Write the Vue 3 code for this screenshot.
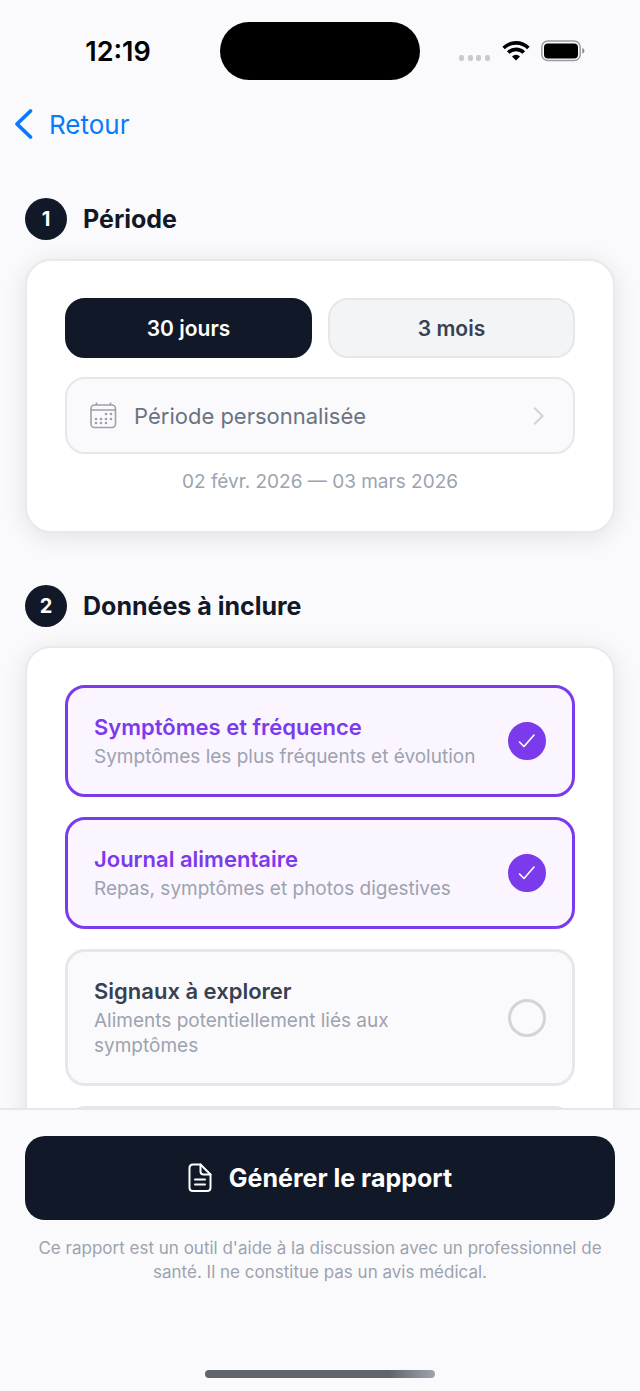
<script setup>
    import { ref } from 'vue';

    const period = ref('30');
    const periods = [
        { id: '30', label: '30 jours' },
        { id: '90', label: '3 mois' }
    ];

    const options = ref([
        {
            id: 'symptoms',
            title: 'Symptômes et fréquence',
            text: 'Symptômes les plus fréquents et évolution',
            checked: true
        },
        {
            id: 'journal',
            title: 'Journal alimentaire',
            text: 'Repas, symptômes et photos digestives',
            checked: true
        },
        {
            id: 'signals',
            title: 'Signaux à explorer',
            text: 'Aliments potentiellement liés aux symptômes',
            checked: false
        }
    ]);

    // small dots of the calendar icon
    const days = [
        [16, 12], [21, 12],
        [6, 17], [11, 17], [16, 17], [21, 17],
        [6, 21], [11, 21], [16, 21]
    ];
</script>


<template>
    <div class="screen">
        <header class="statusBar">
            <span class="time">12:19</span>
            <span class="island"></span>
            <div class="statusIcons">
                <svg width="32" height="22" viewBox="0 0 32 22" fill="#c9cad0">
                    <rect x="0" y="15" width="5" height="6" rx="2" />
                    <rect x="9" y="15" width="5" height="6" rx="2" />
                    <rect x="17" y="15" width="5" height="6" rx="2" />
                    <rect x="26" y="15" width="5" height="6" rx="2" />
                </svg>
                <svg width="28" height="22" viewBox="0 0 28 22" fill="none" stroke="#000" stroke-width="3.6">
                    <path d="M1.6 8 A17.5 17.5 0 0 1 26.4 8" />
                    <path d="M6.2 12.6 A11 11 0 0 1 21.8 12.6" />
                    <path d="M10 16.4 A5.8 5.8 0 0 1 18 16.4 L14 20.6 Z" fill="#000" stroke="none" />
                </svg>
                <svg width="44" height="22" viewBox="0 0 44 22">
                    <rect x="0.8" y="1" width="38.4" height="19.6" rx="6" fill="none" stroke="#9a9ba3" stroke-width="1.5" />
                    <rect x="3" y="3.4" width="34" height="15" rx="4" fill="#000" />
                    <path d="M41.4 8 C44 9 44 12.6 41.4 13.6 Z" fill="#85868e" />
                </svg>
            </div>
        </header>

        <nav class="navBar">
            <a href="#" class="back">
                <svg width="20" height="32" viewBox="0 0 20 32" fill="none" stroke="#087aff" stroke-width="3.8" stroke-linecap="round" stroke-linejoin="round">
                    <path d="M16.5 3 L3 16 L16.5 29" />
                </svg>
                Retour
            </a>
        </nav>

        <main class="content">
            <section>
                <h2><span class="step">1</span>Période</h2>
                <div class="card">
                    <div class="periods">
                        <button
                        v-for="item in periods"
                        :key="item.id"
                        class="periodButton"
                        :class="{ active: period === item.id }"
                        @click="period = item.id">
                            {{ item.label }}
                        </button>
                    </div>
                    <button class="customPeriod">
                        <svg width="27" height="27" viewBox="0 0 27 27" fill="none" stroke="#9ca0aa" stroke-width="1.6">
                            <rect x="1" y="3" width="24.5" height="22.5" rx="3.5" />
                            <path d="M1 8 H25.5 M6.5 0.5 V3 M20.5 0.5 V3" />
                            <circle v-for="[x, y] in days" :key="x + '-' + y" :cx="x" :cy="y" r="1.3" fill="#9ca0aa" stroke="none" />
                        </svg>
                        <span>Période personnalisée</span>
                        <svg width="12" height="18" viewBox="0 0 12 18" fill="none" stroke="#d1d5db" stroke-width="2.4" stroke-linecap="round" stroke-linejoin="round">
                            <path d="M2 1.5 L9.5 9 L2 16.5" />
                        </svg>
                    </button>
                    <p class="dates">02 févr. 2026 — 03 mars 2026</p>
                </div>
            </section>

            <section>
                <h2><span class="step">2</span>Données à inclure</h2>
                <div class="card options">
                    <label
                    v-for="option in options"
                    :key="option.id"
                    class="option"
                    :class="{ selected: option.checked }">
                        <span class="optionText">
                            <span class="optionTitle">{{ option.title }}</span>
                            <span class="optionInfo">{{ option.text }}</span>
                        </span>
                        <span class="check">
                            <input v-model="option.checked" type="checkbox">
                            <svg v-if="option.checked" width="18" height="16" viewBox="0 0 18 16" fill="none" stroke="#fff" stroke-width="1.6" stroke-linecap="round" stroke-linejoin="round">
                                <path d="M1.5 9 L6 13.5 L16 2" />
                            </svg>
                        </span>
                    </label>
                    <div class="option"></div>
                </div>
            </section>
        </main>

        <footer class="bottomBar">
            <button class="generate">
                <svg width="24" height="30" viewBox="0 0 24 30" fill="none" stroke="#fff" stroke-width="2" stroke-linecap="round" stroke-linejoin="round">
                    <path d="M5 1.5 H12.5 L22.5 11.5 V24.5 Q22.5 28 19 28 H5 Q1.5 28 1.5 24.5 V5 Q1.5 1.5 5 1.5 Z" />
                    <path d="M12.5 1.5 V8.5 Q12.5 11.5 15.5 11.5 H22.5 M7 16.5 H17 M7 21.5 H17" />
                </svg>
                Générer le rapport
            </button>
            <p class="notice">Ce rapport est un outil d'aide à la discussion avec un professionnel de santé. Il ne constitue pas un avis médical.</p>
            <div class="homeBar"></div>
        </footer>
    </div>
</template>

<style>
    body {
        background-color: #fafafc;
    }
</style>

<style scoped>
    .screen {
        height: 100vh;
        display: flex;
        flex-direction: column;
        background-color: #fafafc;
        color: #111827;
        font-family: Inter, "Liberation Sans", sans-serif;
    }

    h2, p {
        margin: 0;
    }

    button {
        font-family: inherit;
        cursor: pointer;
    }

    svg {
        flex-shrink: 0;
    }

    .statusBar {
        height: 102px;
        flex-shrink: 0;
        display: grid;
        grid-template-columns: 1fr 200px 1fr;
        align-items: center;
    }

    .time {
        padding-left: 16px;
        text-align: center;
        font-size: 27px;
        font-weight: 600;
        color: #000;
    }

    .island {
        height: 58px;
        border-radius: 29px;
        background-color: #000;
    }

    .statusIcons {
        display: flex;
        justify-content: center;
        gap: 11px;
        padding-right: 16px;
    }

    .navBar {
        height: 44px;
        flex-shrink: 0;
        display: flex;
        align-items: center;
        padding: 0 14px;
    }

    .back {
        display: flex;
        align-items: center;
        gap: 15px;
        font-size: 26px;
        color: #087aff;
        text-decoration: none;
    }

    .content {
        flex: 1;
        min-height: 0;
        overflow: hidden;
        padding: 52px 25px 0;
    }

    section {
        margin-bottom: 52px;
    }

    h2 {
        display: flex;
        align-items: center;
        gap: 16px;
        margin-bottom: 19px;
        font-size: 25px;
        font-weight: 700;
    }

    .step {
        width: 42px;
        height: 42px;
        border-radius: 50%;
        display: flex;
        align-items: center;
        justify-content: center;
        background-color: #111827;
        color: #fff;
        font-size: 20px;
    }

    .card {
        padding: 37px 38px;
        border: 2px solid #e8e9ec;
        border-radius: 26px;
        background-color: #fff;
        box-shadow: 0 4px 26px rgba(0, 0, 0, 0.1);
    }

    .periods {
        display: grid;
        grid-template-columns: 1fr 1fr;
        gap: 16px;
        margin-bottom: 19px;
    }

    .periodButton {
        height: 60px;
        border: 2px solid #e5e7eb;
        border-radius: 20px;
        background-color: #f3f4f6;
        color: #374151;
        font-size: 21px;
        font-weight: 600;
    }

    .periodButton.active {
        border-color: #111827;
        background-color: #111827;
        color: #fff;
    }

    .customPeriod {
        width: 100%;
        height: 77px;
        display: flex;
        align-items: center;
        gap: 17px;
        padding: 0 28px 0 23px;
        border: 2px solid #e5e7eb;
        border-radius: 20px;
        background-color: #fafafc;
        color: #6b7280;
        font-size: 22px;
        text-align: left;
    }

    .customPeriod span {
        flex: 1;
    }

    .dates {
        margin-top: 16px;
        font-size: 19px;
        line-height: 24px;
        text-align: center;
        color: #9ca3af;
    }

    .options {
        display: flex;
        flex-direction: column;
        gap: 20px;
    }

    .option {
        display: flex;
        align-items: center;
        gap: 26px;
        padding: 25px 26px;
        border: 3px solid #e5e7eb;
        border-radius: 20px;
        background-color: #fafafc;
        color: #374151;
    }

    .option.selected {
        border-color: #7c3aed;
        background-color: #faf5ff;
    }

    .optionText {
        flex: 1;
        display: flex;
        flex-direction: column;
        gap: 3px;
    }

    .optionTitle {
        font-size: 22px;
        line-height: 28px;
        font-weight: 600;
    }

    .selected .optionTitle {
        color: #7c3aed;
    }

    .optionInfo {
        font-size: 19px;
        line-height: 25px;
        color: #9ca3af;
    }

    .check {
        display: grid;
        place-items: center;
    }

    .check > * {
        grid-area: 1 / 1;
    }

    .check input {
        appearance: none;
        width: 38px;
        height: 38px;
        margin: 0;
        border: 3px solid #d1d5db;
        border-radius: 50%;
    }

    .check input:checked {
        border-color: #7c3aed;
        background-color: #7c3aed;
    }

    .check svg {
        pointer-events: none;
    }

    .bottomBar {
        flex-shrink: 0;
        padding: 26px 25px 13px;
        border-top: 2px solid #e5e7eb;
        background-color: #fafafc;
    }

    .generate {
        width: 100%;
        height: 84px;
        display: flex;
        align-items: center;
        justify-content: center;
        gap: 17px;
        border: none;
        border-radius: 20px;
        background-color: #111827;
        color: #fff;
        font-size: 25px;
        font-weight: 700;
    }

    .notice {
        margin-top: 16px;
        font-size: 17px;
        line-height: 24px;
        text-align: center;
        color: #9ca3af;
    }

    .homeBar {
        width: 39%;
        height: 8px;
        margin: 86px auto 0;
        border-radius: 4px;
        background: linear-gradient(to right, #60646c 80%, #a0a4ae);
    }
</style>
